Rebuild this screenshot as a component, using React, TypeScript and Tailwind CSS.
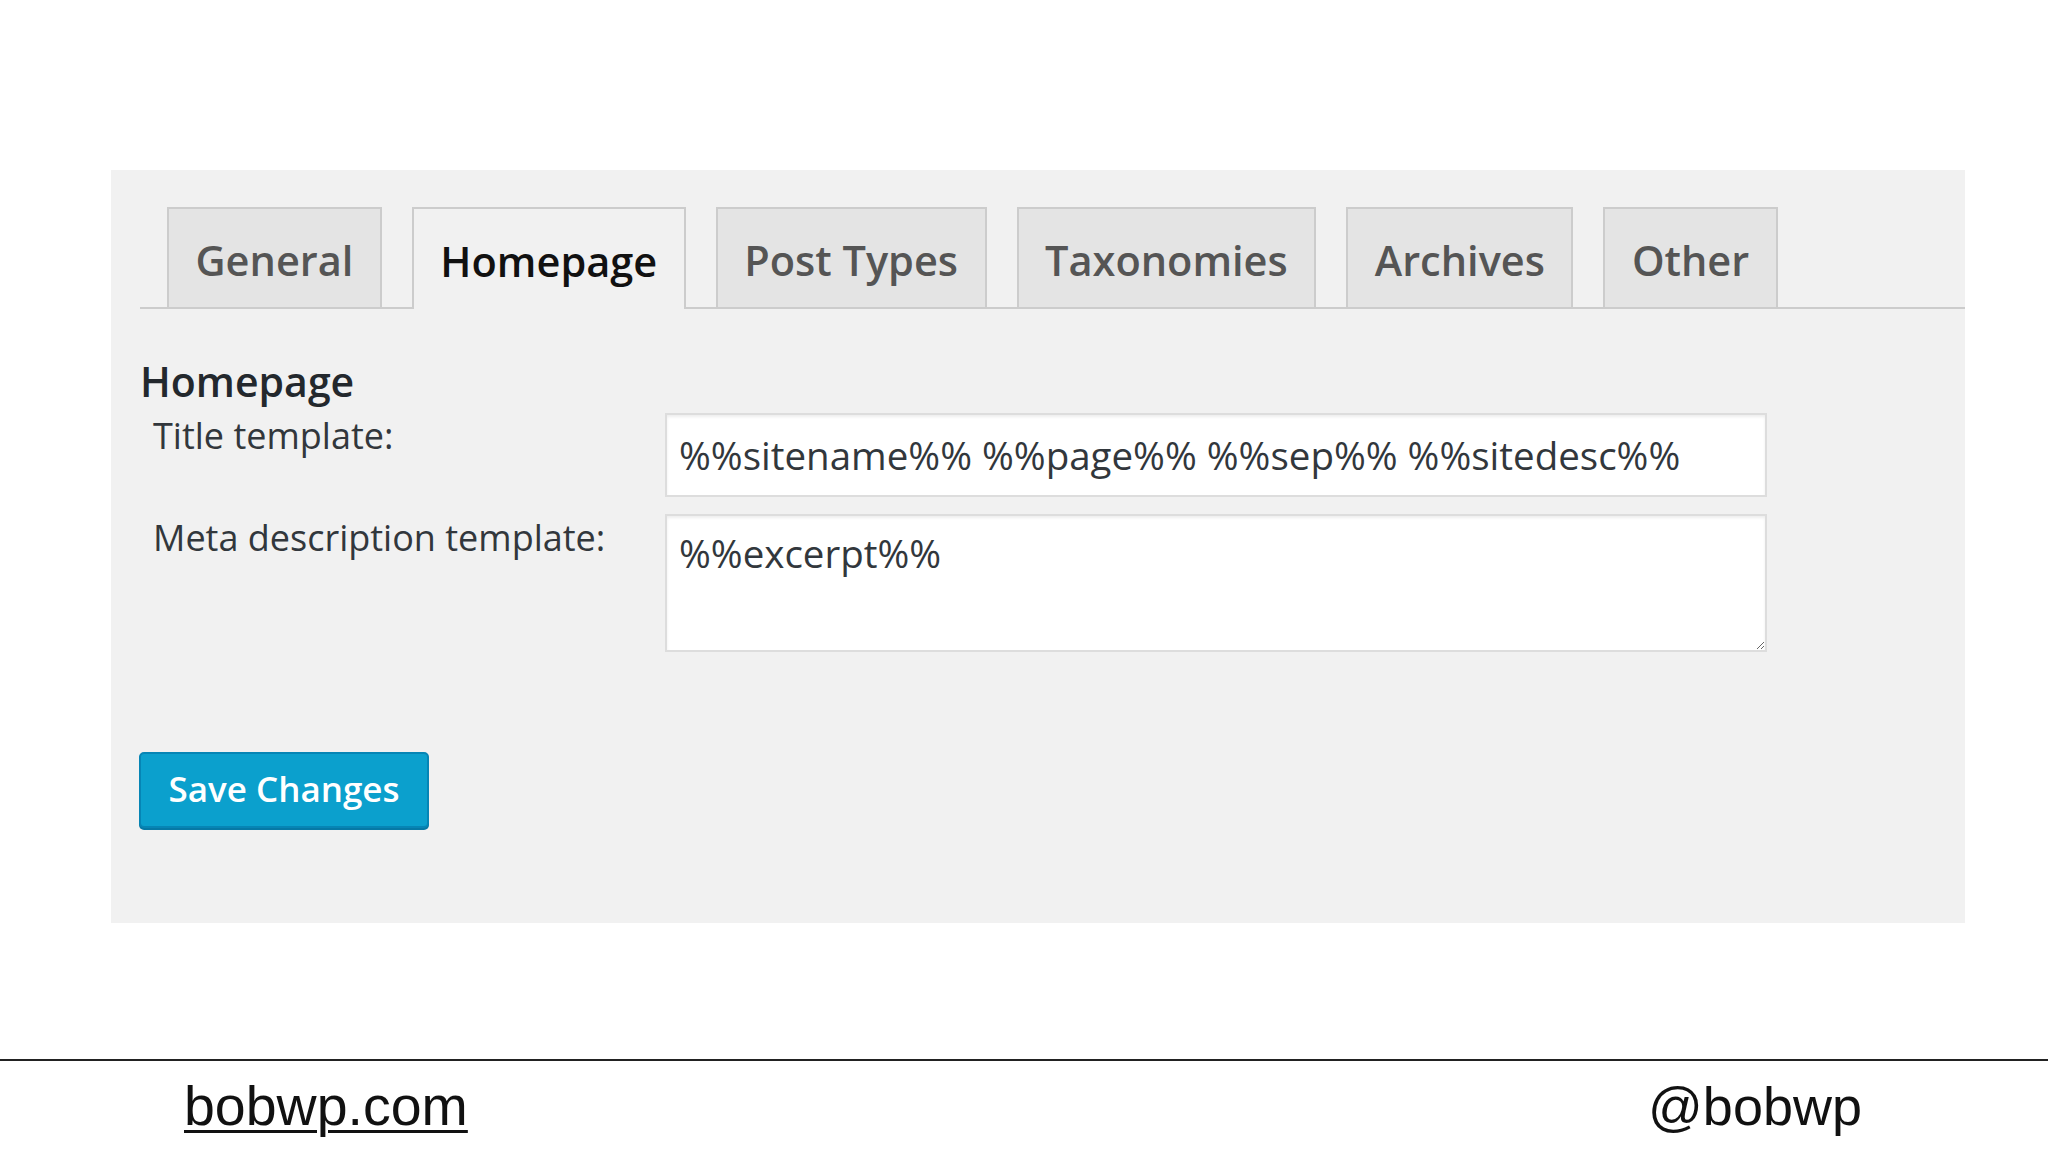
import React from "react";

const tabs = ["General", "Homepage", "Post Types", "Taxonomies", "Archives", "Other"];

export default function App() {
  const font = { fontFamily: '"Open Sans", "Noto Sans", sans-serif' };
  return (
    <div className="w-[2048px] h-[1152px] bg-white flex flex-col overflow-hidden">
      <div className="h-[170px] shrink-0" />
      <div
        className="ml-[111px] w-[1854px] h-[753px] shrink-0 bg-[#f1f1f1] pl-[29px] pt-[37px] flex flex-col"
        style={font}
      >
        <div className="flex items-end gap-[30px] pl-[27px] border-b-2 border-[#cccccc] h-[102px]">
          {tabs.map((t) => {
            const active = t === "Homepage";
            return (
              <div
                key={t}
                className={
                  active
                    ? "h-[102px] -mb-[2px] px-[26.5px] pt-[6px] flex items-center border-2 border-b-0 border-[#cccccc] bg-[#f1f1f1] text-[41.5px] font-semibold text-[#111111] leading-none"
                    : "h-[100px] px-[26.5px] pt-[6px] flex items-center border-2 border-b-0 border-[#cccccc] bg-[#e4e4e4] text-[41.5px] font-semibold text-[#555555] leading-none"
                }
              >
                {t}
              </div>
            );
          })}
        </div>

        <h2 className="mt-[52px] text-[41px] leading-[41px] font-semibold text-[#23282d]">Homepage</h2>

        <div className="mt-[11px] flex">
          <label className="w-[525px] pl-[13px] pt-[5px] text-[36px] leading-[36px] text-[#32373c]">
            Title template:
          </label>
          <input
            readOnly
            value="%%sitename%% %%page%% %%sep%% %%sitedesc%%"
            className="w-[1102px] h-[84px] border-2 border-[#dddddd] bg-white px-[12px] text-[38.5px] text-[#32373c] outline-none shadow-[inset_0_2px_3px_rgba(0,0,0,0.07)]"
            style={font}
          />
        </div>

        <div className="mt-[17px] flex">
          <label className="w-[525px] pl-[13px] pt-[6px] text-[36px] leading-[36px] text-[#32373c]">
            Meta description template:
          </label>
          <textarea
            readOnly
            value="%%excerpt%%"
            className="w-[1102px] h-[138px] border-2 border-[#dddddd] bg-white px-[12px] pt-[11px] text-[38.5px] leading-[52px] text-[#32373c] outline-none shadow-[inset_0_2px_3px_rgba(0,0,0,0.07)]"
            style={font}
          />
        </div>

        <button
          className="mt-[100px] w-[290px] h-[76px] -ml-[1px] pb-[4px] bg-[#0ba0cd] border-2 border-[#0685b5] rounded-[5px] text-white text-[35px] font-semibold leading-none shadow-[0_2px_0_#0679a5] flex items-center justify-center"
          style={font}
        >
          Save Changes
        </button>
      </div>

      <div className="mt-[136px] border-t-2 border-[#222222] flex justify-between pl-[184px] pr-[186px] pt-[18px]">
        <span
          className="text-[55.5px] leading-[54px] text-[#111111] underline decoration-[3px] underline-offset-[5px]"
          style={{ fontFamily: '"Liberation Sans", Arial, sans-serif' }}
        >
          bobwp.com
        </span>
        <span
          className="text-[54px] leading-[54px] text-[#111111]"
          style={{ fontFamily: '"Liberation Sans", Arial, sans-serif' }}
        >
          @bobwp
        </span>
      </div>
    </div>
  );
}
